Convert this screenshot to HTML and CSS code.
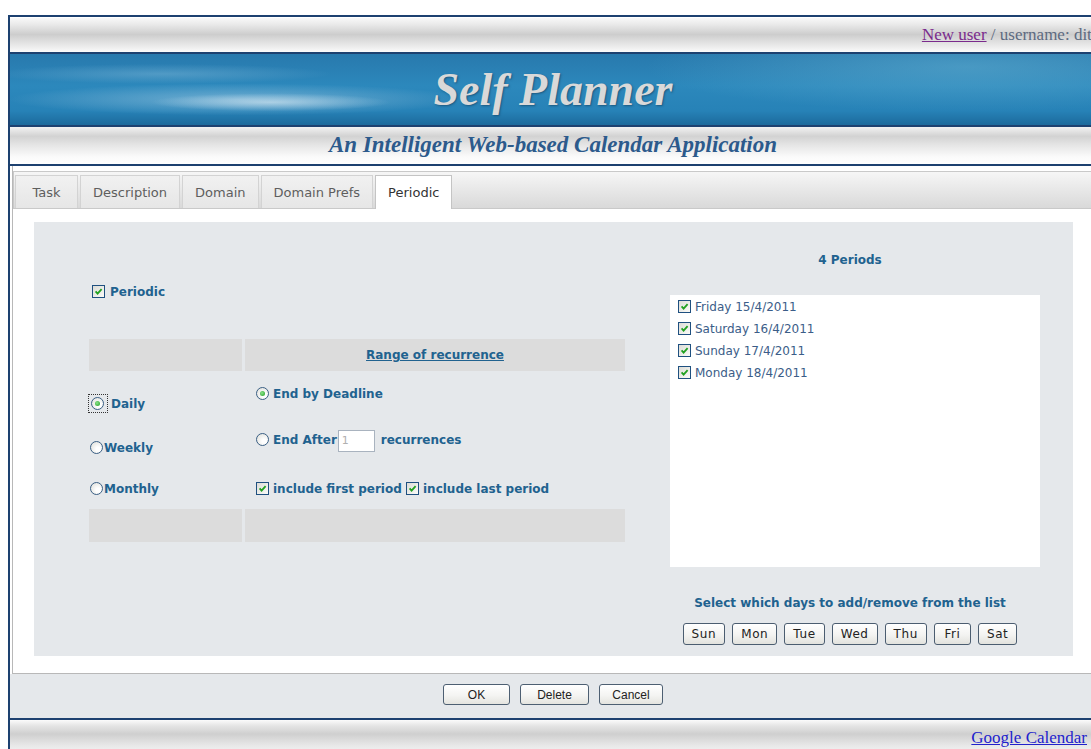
FILE: index.html
```html
<!DOCTYPE html>
<html lang="en">
<head>
<meta charset="utf-8">
<title>Self Planner</title>
<link rel="stylesheet" href="styles.css">
</head>
<body>
<div class="page">
  <div class="topbar"><a class="visited" href="#">New user</a> / username: ditsa</div>

  <div class="banner"><h1 class="title">Self Planner</h1></div>

  <div class="subbar"><h2 class="subtitle">An Intelligent Web-based Calendar Application</h2></div>

  <div class="main">
    <div class="tabs">
      <span class="tab">Task</span>
      <span class="tab">Description</span>
      <span class="tab">Domain</span>
      <span class="tab">Domain Prefs</span>
      <span class="tab active">Periodic</span>
    </div>

    <div class="panel">
      <div class="left">
        <div class="periodic"><span class="cb"><svg viewBox="0 0 9 9"><path d="M1.6 4.4 L3.6 6.6 L7.6 2.2"/></svg></span>Periodic</div>

        <div class="rec">
          <div class="cell head"></div>
          <div class="cell head"><a href="#">Range of recurrence</a></div>

          <div class="cell freq f1"><span class="focus"><span class="rb on"></span></span>Daily</div>
          <div class="cell end e1"><span class="rb on"></span>End by Deadline</div>

          <div class="cell freq f2"><span class="rb"></span>Weekly</div>
          <div class="cell end e2"><span class="rb"></span>End After<span class="num">1</span>recurrences</div>

          <div class="cell freq f3"><span class="rb"></span>Monthly</div>
          <div class="cell end e3"><span class="cb"><svg viewBox="0 0 9 9"><path d="M1.6 4.4 L3.6 6.6 L7.6 2.2"/></svg></span>include first period <span class="cb"><svg viewBox="0 0 9 9"><path d="M1.6 4.4 L3.6 6.6 L7.6 2.2"/></svg></span>include last period</div>

          <div class="cell foot"></div>
          <div class="cell foot"></div>
        </div>
      </div>

      <div class="right">
        <div class="count">4 Periods</div>
        <div class="list">
          <div class="item"><span class="cb"><svg viewBox="0 0 9 9"><path d="M1.6 4.4 L3.6 6.6 L7.6 2.2"/></svg></span>Friday 15/4/2011</div>
          <div class="item"><span class="cb"><svg viewBox="0 0 9 9"><path d="M1.6 4.4 L3.6 6.6 L7.6 2.2"/></svg></span>Saturday 16/4/2011</div>
          <div class="item"><span class="cb"><svg viewBox="0 0 9 9"><path d="M1.6 4.4 L3.6 6.6 L7.6 2.2"/></svg></span>Sunday 17/4/2011</div>
          <div class="item"><span class="cb"><svg viewBox="0 0 9 9"><path d="M1.6 4.4 L3.6 6.6 L7.6 2.2"/></svg></span>Monday 18/4/2011</div>
        </div>
        <div class="hint">Select which days to add/remove from the list</div>
        <div class="days">
          <button class="day">Sun</button>
          <button class="day">Mon</button>
          <button class="day">Tue</button>
          <button class="day">Wed</button>
          <button class="day">Thu</button>
          <button class="day">Fri</button>
          <button class="day">Sat</button>
        </div>
      </div>
    </div>
  </div>

  <div class="actions">
    <button class="btn btn-ok">OK</button>
    <button class="btn btn-delete">Delete</button>
    <button class="btn btn-cancel">Cancel</button>
  </div>

  <div class="footbar"><a href="#">Google Calendar</a></div>
</div>
</body>
</html>
```

FILE: styles.css
```css
html, body {
  margin: 0;
  padding: 0;
  background: #fff;
  overflow: hidden;
}

body {
  font-family: "Liberation Serif", "Times New Roman", serif;
}

.page {
  width: 1086px;
  margin: 15px 0 0 8px;
  border-left: 2px solid #1d4170;
  border-right: 2px solid #1d4170;
}

/* ---- header bars ---- */
.topbar {
  height: 35px;
  border-top: 2px solid #1d4170;
  border-bottom: 2px solid #1d4170;
  background: linear-gradient(#fbfbfb 0%, #e9e9e9 22%, #cdcdcd 50%, #e6e6e6 78%, #fafafa 100%);
  box-shadow: inset 0 1px 0 #fff;
  text-align: right;
  margin-right: -10px;
  font-size: 17px;
  line-height: 35px;
  color: #5d6a80;
  white-space: nowrap;
}

.topbar a.visited {
  color: #7a2a8c;
  text-decoration: underline;
}

.banner {
  height: 71px;
  border-bottom: 2px solid #1d4170;
  background:
    radial-gradient(ellipse 120px 9px at 24% 68%, rgba(235,243,248,0.55), rgba(235,243,248,0) 100%),
    radial-gradient(ellipse 230px 16px at 21% 64%, rgba(200,225,240,0.45), rgba(200,225,240,0) 100%),
    radial-gradient(ellipse 170px 10px at 14% 28%, rgba(170,210,232,0.3), rgba(170,210,232,0) 100%),
    radial-gradient(ellipse 320px 45px at 88% 18%, rgba(110,185,215,0.45), rgba(110,185,215,0) 100%),
    linear-gradient(#2879ad 0%, #2c88bc 45%, #2782b7 80%, #1c6a9c 100%);
  text-align: center;
}

.title {
  margin: 0;
  font: italic bold 46px/71px "Liberation Serif", "Times New Roman", serif;
  color: #d9d9d9;
  text-shadow: 1px 1px 2px rgba(20, 60, 90, 0.6);
}

.subbar {
  height: 37px;
  border-bottom: 2px solid #1d4170;
  background: linear-gradient(#f2f2f2 0%, #d2d2d2 25%, #e6e6e6 50%, #fafafa 80%, #ffffff 100%);
  text-align: center;
}

.subtitle {
  margin: 0;
  font: italic bold 23px/36px "Liberation Serif", "Times New Roman", serif;
  color: #2c5a8c;
}

/* ---- main form area ---- */
.main {
  margin: 0 2px;
  padding: 5px 0 17px;
  border: 1px solid #b8b8b8;
  border-top: none;
  background: #fff;
}

.tabs {
  display: flex;
  gap: 2px;
  height: 33px;
  padding: 3px 0 0 1px;
  border: 1px solid #c9c9c9;
  background: linear-gradient(#f6f6f6, #d9d9d9);
  font: 13px "DejaVu Sans", Verdana, sans-serif;
}

.tab {
  display: flex;
  align-items: center;
  justify-content: center;
  box-sizing: border-box;
  min-width: 63px;
  padding: 0 12px;
  background: linear-gradient(#f1f1f1, #e6e6e6);
  border: 1px solid #d3d3d3;
  border-bottom: none;
  color: #5e5e5e;
}

.tab.active {
  background: #fff;
  border-color: #c4c4c4;
  color: #333;
  margin-bottom: -1px;
}

.panel {
  display: grid;
  grid-template-columns: 536px 420px;
  column-gap: 15px;
  height: 434px;
  margin: 13px 20px 0 21px;
  padding-left: 55px;
  background: #e5e8eb;
  font: bold 12px/16px "DejaVu Sans", Verdana, sans-serif;
  color: #21628f;
}

/* checkbox */
.cb {
  display: inline-block;
  width: 11px;
  height: 11px;
  border: 1px solid #1f5080;
  background: linear-gradient(135deg, #dcdcd6, #fbfbf8);
  vertical-align: -2px;
  margin-right: 4px;
}

.cb svg {
  display: block;
  width: 9px;
  height: 9px;
  margin: 1px;
}

.cb path {
  fill: none;
  stroke: #21a121;
  stroke-width: 1.8;
}

/* radio */
.rb {
  display: inline-block;
  width: 11px;
  height: 11px;
  border: 1px solid #3a5f84;
  border-radius: 50%;
  background: radial-gradient(circle at 65% 65%, #ffffff 20%, #dcdcd6 100%);
  vertical-align: -2px;
  margin-right: 4px;
}

.rb.on::after {
  content: "";
  display: block;
  width: 5px;
  height: 5px;
  margin: 3px;
  border-radius: 50%;
  background: radial-gradient(circle at 40% 40%, #8be38b, #1f9d1f);
}

.focus {
  display: inline-block;
  padding: 2px;
  outline: 1px dotted #333;
  margin-right: 4px;
}

.focus .rb {
  display: block;
  margin-right: 0;
}

.periodic {
  padding: 62px 0 0 3px;
}

.periodic .cb {
  margin-right: 5px;
}

.rec {
  display: grid;
  grid-template-columns: 153px 380px;
  grid-template-rows: 32px 50px 45px 43px 33px;
  column-gap: 3px;
  margin-top: 39px;
}

.cell.head,
.cell.foot {
  background: #dcdcdc;
}

.cell.head a {
  display: block;
  text-align: center;
  line-height: 32px;
  color: #21628f;
  text-decoration: underline;
}

.freq {
  padding-left: 1px;
}

.freq .rb {
  margin-right: 1px;
}

.end {
  padding-left: 11px;
}

.f1 {
  display: flex;
  align-items: center;
  align-self: start;
  margin-top: 24px;
  padding-left: 0;
}

.e1 { padding-top: 15px; }
.f2 { padding-top: 19px; }
.e2 { padding-top: 8px; line-height: 22px; }
.f3, .e3 { padding-top: 15px; }

.num {
  display: inline-block;
  width: 37px;
  height: 22px;
  margin: 0 6px 0 1px;
  padding-left: 3px;
  box-sizing: border-box;
  border: 1px solid #a9b3bf;
  background: #fff;
  font: 11px/20px "DejaVu Sans", Verdana, sans-serif;
  color: #b0b0b0;
  vertical-align: middle;
}

.right {
  display: flex;
  flex-direction: column;
  align-items: center;
  padding-top: 30px;
}

.list {
  align-self: stretch;
  height: 271px;
  margin: 27px 20px 0 30px;
  padding: 1px 0 0 8px;
  background: #fff;
  font-weight: normal;
  color: #3b5d88;
}

.item {
  line-height: 22px;
}

.hint {
  margin-top: 28px;
}

.days {
  display: flex;
  gap: 7px;
  margin-top: 12px;
}

.day {
  min-width: 37px;
  height: 22px;
  padding: 0 8px;
  border: 1px solid #4b5d70;
  border-radius: 3px;
  background: linear-gradient(#ffffff, #f3f3f1 55%, #e2e2dd);
  font: 12px "DejaVu Sans", Verdana, sans-serif;
  letter-spacing: 0.6px;
  color: #222;
}

/* ---- bottom bars ---- */
.actions {
  display: flex;
  justify-content: center;
  gap: 10px;
  height: 34px;
  padding-top: 10px;
  background: #e5e8eb;
  border-bottom: 2px solid #1d4170;
}

.btn {
  height: 21px;
  border: 1px solid #4d5f72;
  border-radius: 3px;
  background: linear-gradient(#ffffff, #f4f4f2 55%, #e4e4df);
  font: 12px "Liberation Sans", Arial, sans-serif;
  color: #222;
}

.btn-ok { width: 67px; }
.btn-delete { width: 69px; }
.btn-cancel { width: 64px; }

.footbar {
  height: 40px;
  background: linear-gradient(#fbfbfb 0%, #e4e4e4 15%, #cfcfcf 35%, #e9e9e9 65%, #fafafa 100%);
  text-align: right;
  padding-right: 9px;
  font-size: 17px;
  line-height: 36px;
}

.footbar a {
  color: #2222cc;
  text-decoration: underline;
}
```
